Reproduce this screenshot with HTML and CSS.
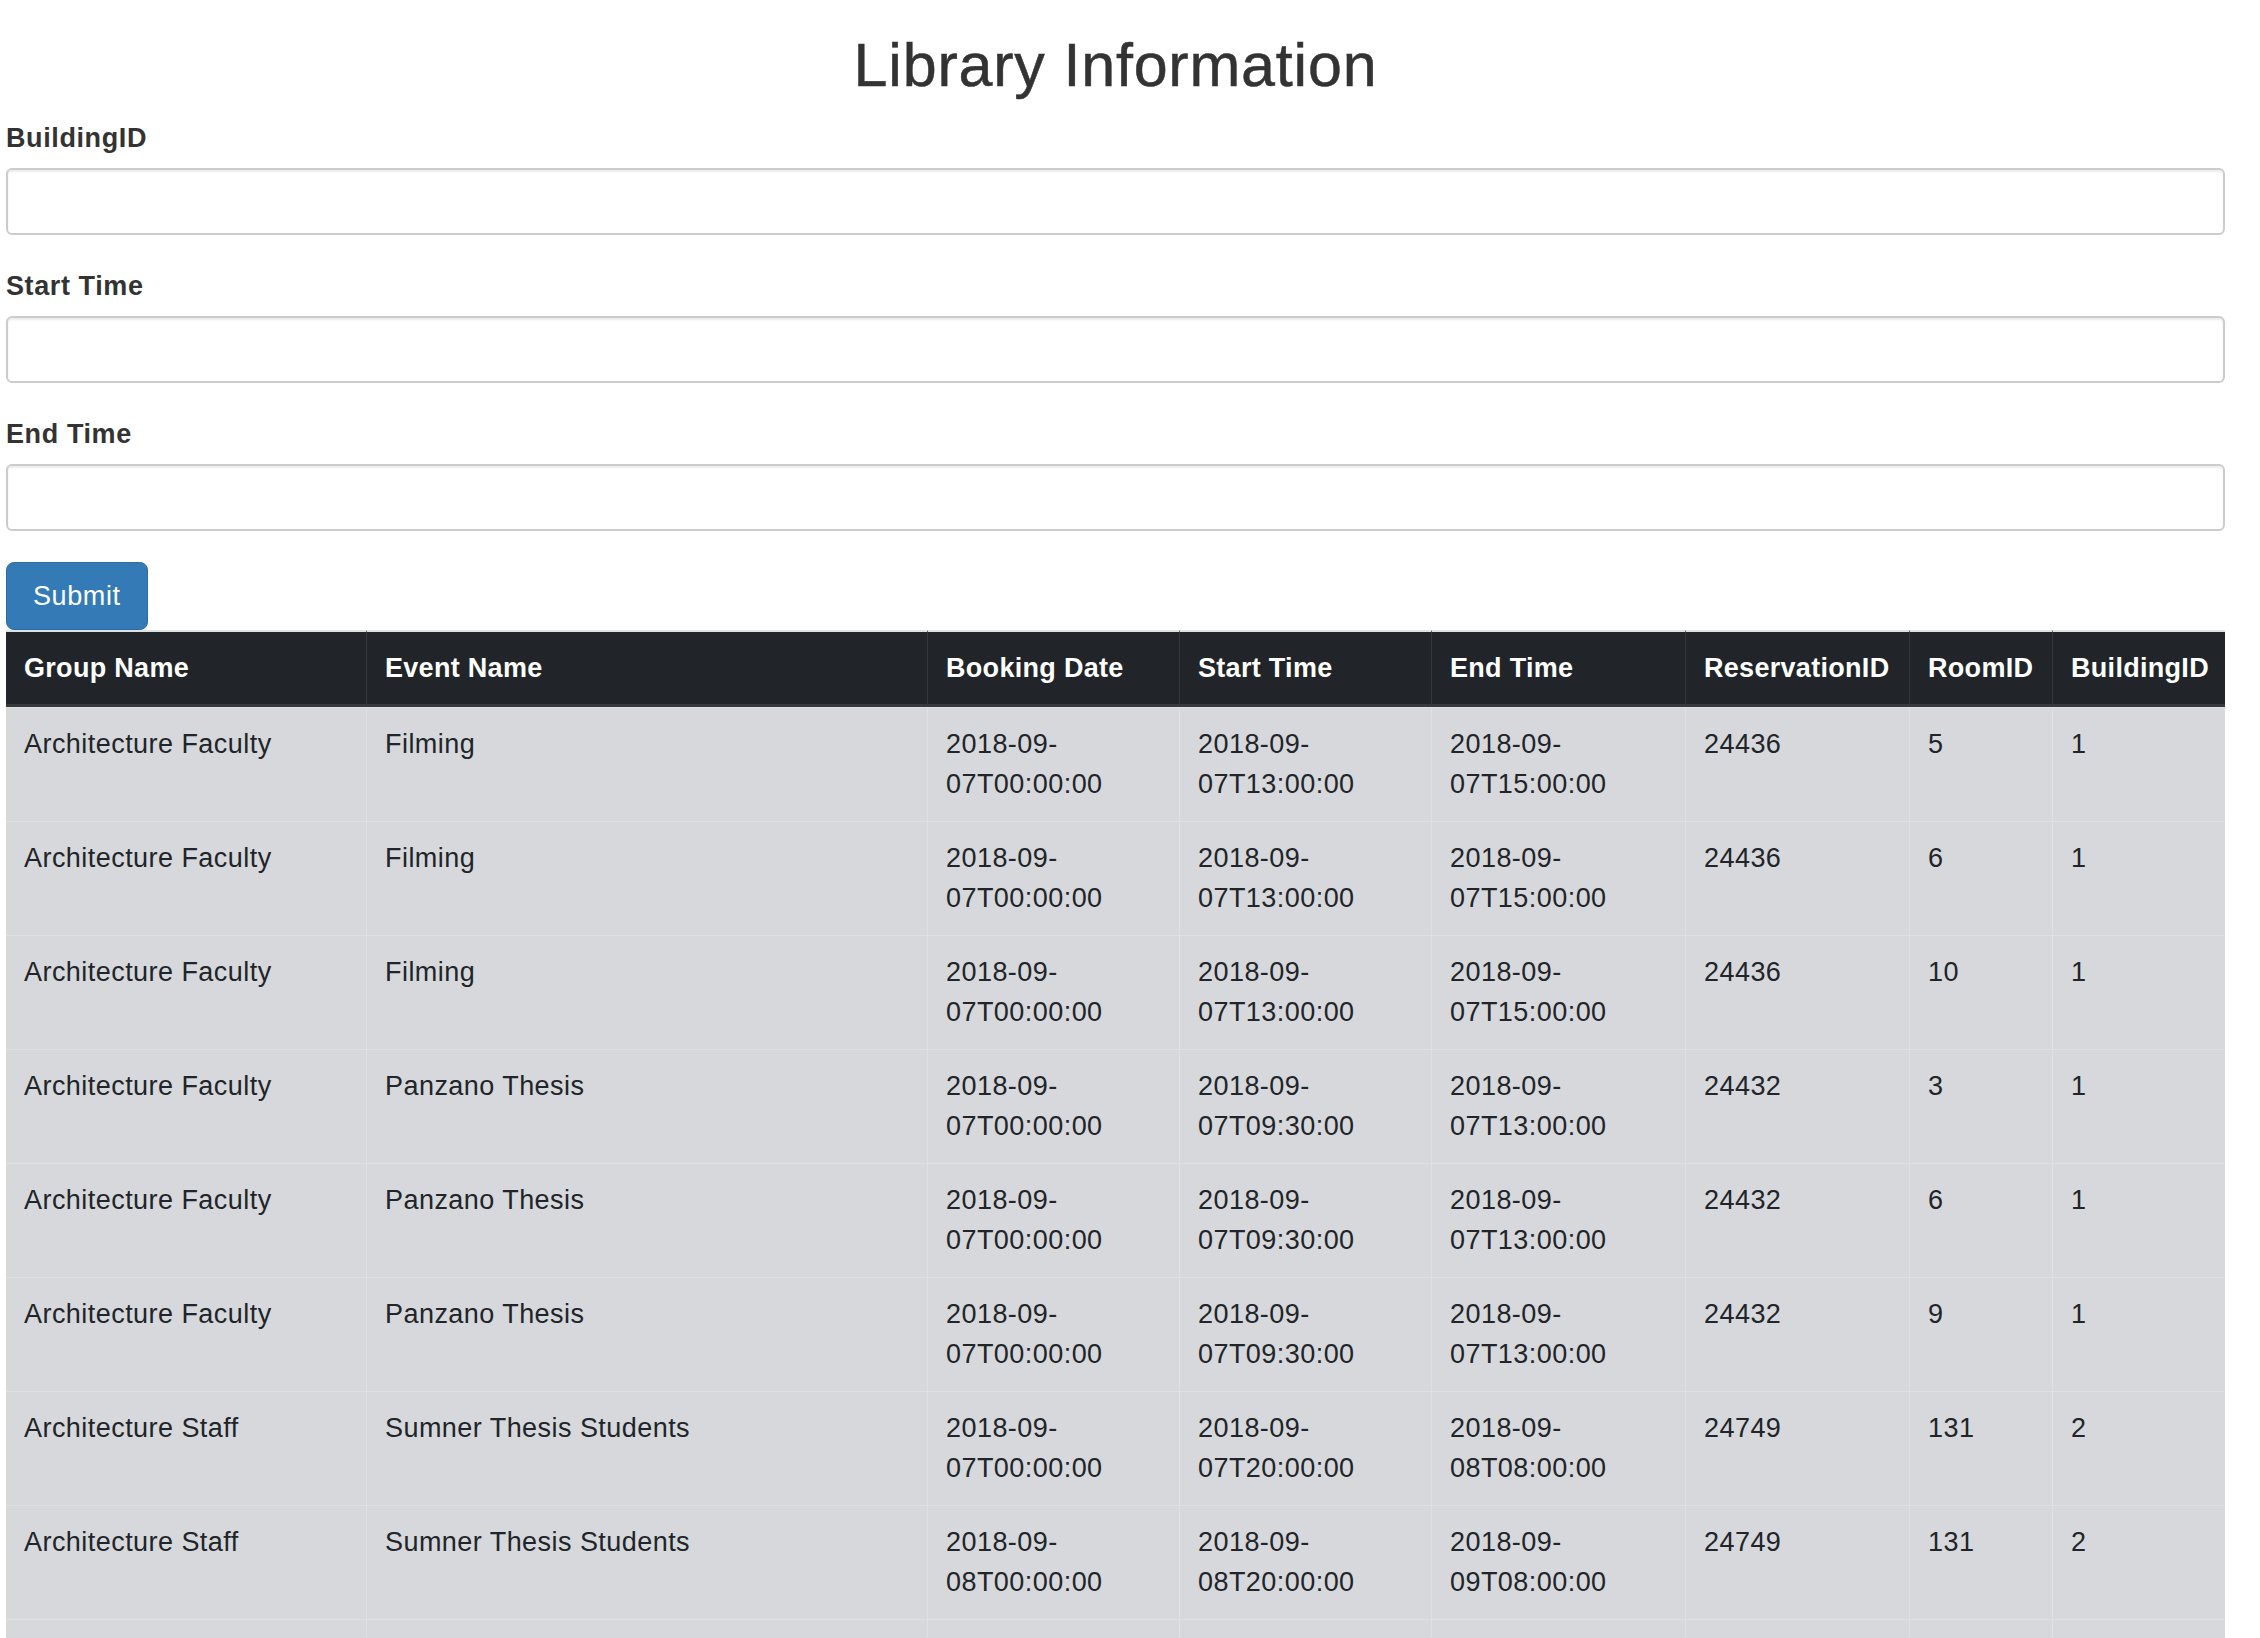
FILE: index.html
```html
<!DOCTYPE html>
<html lang="en">
<head>
<meta charset="utf-8">
<title>Library Information</title>
<link rel="stylesheet" href="styles.css">
</head>
<body>
<div class="container">
  <h1 class="title">Library Information</h1>
  <form class="form">
    <div class="form-group">
      <label class="form-label" for="building">BuildingID</label>
      <input class="form-input" id="building" type="text">
    </div>
    <div class="form-group">
      <label class="form-label" for="start">Start Time</label>
      <input class="form-input" id="start" type="text">
    </div>
    <div class="form-group last">
      <label class="form-label" for="end">End Time</label>
      <input class="form-input" id="end" type="text">
    </div>
    <div class="actions">
      <button class="btn" type="button">Submit</button>
    </div>
  </form>
  <table class="data">
    <colgroup>
      <col class="c-group"><col class="c-event"><col class="c-date"><col class="c-start"><col class="c-end"><col class="c-res"><col class="c-room"><col class="c-bld">
    </colgroup>
    <thead>
      <tr>
        <th>Group Name</th><th>Event Name</th><th>Booking Date</th><th>Start Time</th><th>End Time</th><th>ReservationID</th><th>RoomID</th><th>BuildingID</th>
      </tr>
    </thead>
    <tbody>
      <tr><td>Architecture Faculty</td><td>Filming</td><td>2018-09-<wbr>07T00:00:00</td><td>2018-09-<wbr>07T13:00:00</td><td>2018-09-<wbr>07T15:00:00</td><td>24436</td><td>5</td><td>1</td></tr>
      <tr><td>Architecture Faculty</td><td>Filming</td><td>2018-09-<wbr>07T00:00:00</td><td>2018-09-<wbr>07T13:00:00</td><td>2018-09-<wbr>07T15:00:00</td><td>24436</td><td>6</td><td>1</td></tr>
      <tr><td>Architecture Faculty</td><td>Filming</td><td>2018-09-<wbr>07T00:00:00</td><td>2018-09-<wbr>07T13:00:00</td><td>2018-09-<wbr>07T15:00:00</td><td>24436</td><td>10</td><td>1</td></tr>
      <tr><td>Architecture Faculty</td><td>Panzano Thesis</td><td>2018-09-<wbr>07T00:00:00</td><td>2018-09-<wbr>07T09:30:00</td><td>2018-09-<wbr>07T13:00:00</td><td>24432</td><td>3</td><td>1</td></tr>
      <tr><td>Architecture Faculty</td><td>Panzano Thesis</td><td>2018-09-<wbr>07T00:00:00</td><td>2018-09-<wbr>07T09:30:00</td><td>2018-09-<wbr>07T13:00:00</td><td>24432</td><td>6</td><td>1</td></tr>
      <tr><td>Architecture Faculty</td><td>Panzano Thesis</td><td>2018-09-<wbr>07T00:00:00</td><td>2018-09-<wbr>07T09:30:00</td><td>2018-09-<wbr>07T13:00:00</td><td>24432</td><td>9</td><td>1</td></tr>
      <tr><td>Architecture Staff</td><td>Sumner Thesis Students</td><td>2018-09-<wbr>07T00:00:00</td><td>2018-09-<wbr>07T20:00:00</td><td>2018-09-<wbr>08T08:00:00</td><td>24749</td><td>131</td><td>2</td></tr>
      <tr><td>Architecture Staff</td><td>Sumner Thesis Students</td><td>2018-09-<wbr>08T00:00:00</td><td>2018-09-<wbr>08T20:00:00</td><td>2018-09-<wbr>09T08:00:00</td><td>24749</td><td>131</td><td>2</td></tr>
      <tr class="empty-row"><td></td><td></td><td></td><td></td><td></td><td></td><td></td><td></td></tr>
    </tbody>
  </table>
</div>
</body>
</html>
```
FILE: styles.css
```css
* { box-sizing: border-box; }

body {
  margin: 0;
  background: #ffffff;
  font-family: "Liberation Sans", Arial, Helvetica, sans-serif;
  color: #212529;
}

.container {
  margin: 0 35px 0 6px;
}

.title {
  margin: 32px 0 20px;
  font-size: 61px;
  line-height: 67px;
  font-weight: 400;
  text-align: center;
  color: #333333;
  letter-spacing: 0.8px;
  -webkit-text-stroke: 0.5px #333333;
}

.form { margin: 0; }

.form-group { margin-bottom: 32px; }
.form-group.last { margin-bottom: 31px; }

.form-label {
  display: block;
  font-size: 27px;
  line-height: 38px;
  font-weight: 700;
  color: #333333;
  margin-bottom: 11px;
  letter-spacing: 0.6px;
}

.form-input {
  display: block;
  width: 100%;
  height: 67px;
  border: 2px solid #cccccc;
  border-radius: 6px;
  background: #ffffff;
  box-shadow: inset 0 2px 2px rgba(0, 0, 0, 0.075);
  font: inherit;
  font-size: 27px;
}

.actions { display: flex; }

.btn {
  font-family: inherit;
  font-size: 27px;
  line-height: 40px;
  letter-spacing: 0.6px;
  padding: 13px 26px;
  color: #ffffff;
  background: #337ab7;
  border: 1px solid #2e6da4;
  border-radius: 8px;
}

.data {
  width: 100%;
  table-layout: fixed;
  border-collapse: separate;
  border-spacing: 0;
  font-size: 27px;
  line-height: 40px;
  letter-spacing: 0.3px;
}

.c-group { width: 360px; }
.c-event { width: 561px; }
.c-date { width: 252px; }
.c-start { width: 252px; }
.c-end { width: 254px; }
.c-res { width: 224px; }
.c-room { width: 143px; }
.c-bld { width: 173px; }

.data th {
  background: #212529;
  color: #ffffff;
  text-align: left;
  font-weight: 700;
  padding: 16px 18px 16px 18px;
  border-top: 2px solid #dee2e6;
  border-bottom: 3px solid #343a40;
  border-left: 1px solid #32383e;
  white-space: nowrap;
}

.data th:first-child { border-left: none; }

.data td {
  background: #d6d8db;
  color: #212529;
  vertical-align: top;
  padding: 16px 18px 17px 18px;
  letter-spacing: 0.45px;
  border-top: 1px solid #dfe0e3;
  border-left: 1px solid #dfe0e3;
}

.data td:first-child { border-left: none; }

.data .empty-row td { height: 114px; }
```
